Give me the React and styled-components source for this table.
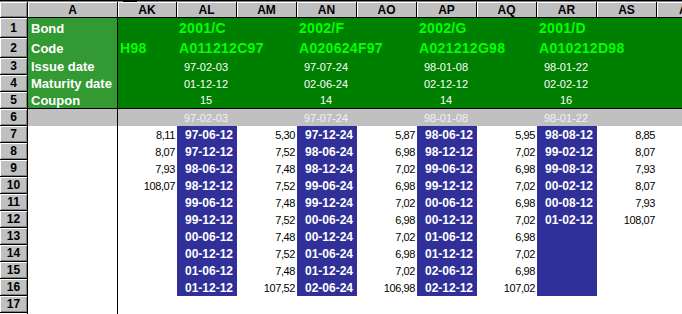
import React from "react";
import styled, { createGlobalStyle, css } from "styled-components";

const GlobalStyle = createGlobalStyle`
  html, body {
    margin: 0;
    padding: 0;
    background: #ffffff;
    overflow: hidden;
  }
`;

const Sheet = styled.div`
  width: 682px;
  height: 314px;
  overflow: hidden;
  font-family: "Liberation Sans", Arial, sans-serif;
  background: #ffffff;
`;

const TopBar = styled.div`
  display: flex;
  height: 2px;
  width: 720px;
  background: #808080;
  border-top: 1px solid #000;
  box-sizing: border-box;
`;

const Notch = styled.div`
  width: 14px;
  height: 2px;
  margin-left: 123px;
  margin-top: -1px;
  background: #000;
`;

const Row = styled.div`
  display: flex;
  width: 720px;
  height: ${(p) => p.$h}px;

  ${(p) =>
    p.$rule &&
    css`
      & > *:not(:first-child) {
        border-bottom: 1px solid #000;
      }
    `}
`;

const Corner = styled.div`
  flex: 0 0 28px;
  box-sizing: border-box;
  background: #c0c0c0;
  border-right: 1px solid #000;
  border-bottom: 1px solid #000;
  box-shadow: inset 1px 1px 0 #fff, inset -1px -1px 0 #808080;
`;

const RowHead = styled(Corner)`
  display: flex;
  align-items: center;
  justify-content: center;
  font-size: 12px;
  font-weight: bold;
  color: #000;
`;

const ColHead = styled.div`
  flex: 0 0 ${(p) => p.$w}px;
  min-width: 0;
  box-sizing: border-box;
  background: #c0c0c0;
  border-right: 1px solid #000;
  border-bottom: 1px solid #000;
  box-shadow: inset 1px 1px 0 #fff;
  display: flex;
  align-items: center;
  justify-content: center;
  font-size: 12px;
  font-weight: bold;
  color: #000;
  white-space: nowrap;
`;

const toneBg = {
  label: "#339933",
  green: "#008000",
  gray: "#c0c0c0",
  blue: "#303098",
  plain: "#ffffff",
};

const LabelCell = styled.div`
  flex: 0 0 90px;
  min-width: 0;
  box-sizing: border-box;
  border-right: 1px solid #000;
  background: ${(p) => toneBg[p.$tone]};
  display: flex;
  align-items: center;
  padding-left: 3px;
  font-size: 13px;
  font-weight: bold;
  color: #fff;
  white-space: nowrap;
`;

const kindFont = {
  code: css`
    font-size: 14px;
    font-weight: bold;
    color: #00ff00;
    letter-spacing: 0.3px;
  `,
  date: css`
    font-size: 11px;
    color: #fff;
  `,
  faint: css`
    font-size: 11px;
    color: #f2f2f2;
  `,
  num: css`
    font-size: 11px;
    color: #000;
    letter-spacing: -0.4px;
  `,
  pay: css`
    font-size: 12px;
    font-weight: bold;
    color: #fff;
  `,
};

const justify = { left: "flex-start", center: "center", right: "flex-end" };

const Cell = styled.div`
  flex: 0 0 ${(p) => p.$w}px;
  min-width: 0;
  box-sizing: border-box;
  background: ${(p) => toneBg[p.$tone]};
  display: flex;
  align-items: center;
  justify-content: ${(p) => justify[p.$align]};
  padding: ${(p) =>
    p.$align === "left" ? "0 0 0 2px" : p.$kind === "pay" ? "0 4px 0 0" : "0 2px 0 0"};
  white-space: nowrap;
  ${(p) => kindFont[p.$kind]}
`;

// text spills over the neighbouring empty cell, as in a spreadsheet
const Spill = styled.span`
  position: relative;
  z-index: 1;
`;

const columns = [
  { id: "AK", w: 59 },
  { id: "AL", w: 60, bond: 0 },
  { id: "AM", w: 60 },
  { id: "AN", w: 60, bond: 1 },
  { id: "AO", w: 60 },
  { id: "AP", w: 60, bond: 2 },
  { id: "AQ", w: 60 },
  { id: "AR", w: 60, bond: 3 },
  { id: "AS", w: 60 },
  { id: "AT", w: 60 },
];

const bonds = [
  { name: "2001/C", code: "A011212C97", issue: "97-02-03", maturity: "01-12-12", coupon: "15" },
  { name: "2002/F", code: "A020624F97", issue: "97-07-24", maturity: "02-06-24", coupon: "14" },
  { name: "2002/G", code: "A021212G98", issue: "98-01-08", maturity: "02-12-12", coupon: "14" },
  { name: "2001/D", code: "A010212D98", issue: "98-01-22", maturity: "02-02-12", coupon: "16" },
];

// rows 7..16, columns AK..AS
const flows = [
  ["8,11", "97-06-12", "5,30", "97-12-24", "5,87", "98-06-12", "5,95", "98-08-12", "8,85"],
  ["8,07", "97-12-12", "7,52", "98-06-24", "6,98", "98-12-12", "7,02", "99-02-12", "8,07"],
  ["7,93", "98-06-12", "7,48", "98-12-24", "7,02", "99-06-12", "6,98", "99-08-12", "7,93"],
  ["108,07", "98-12-12", "7,52", "99-06-24", "6,98", "99-12-12", "7,02", "00-02-12", "8,07"],
  ["", "99-06-12", "7,48", "99-12-24", "7,02", "00-06-12", "6,98", "00-08-12", "7,93"],
  ["", "99-12-12", "7,52", "00-06-24", "6,98", "00-12-12", "7,02", "01-02-12", "108,07"],
  ["", "00-06-12", "7,48", "00-12-24", "7,02", "01-06-12", "6,98", "", ""],
  ["", "00-12-12", "7,52", "01-06-24", "6,98", "01-12-12", "7,02", "", ""],
  ["", "01-06-12", "7,48", "01-12-24", "7,02", "02-06-12", "6,98", "", ""],
  ["", "01-12-12", "107,52", "02-06-24", "106,98", "02-12-12", "107,02", "", ""],
];

const headerRows = [
  { n: 1, h: 20, label: "Bond", field: "name", kind: "code", align: "left" },
  { n: 2, h: 20, label: "Code", field: "code", kind: "code", align: "left" },
  { n: 3, h: 17, label: "Issue date", field: "issue", kind: "date", align: "center" },
  { n: 4, h: 17, label: "Maturity date", field: "maturity", kind: "date", align: "center" },
  { n: 5, h: 17, label: "Coupon", field: "coupon", kind: "date", align: "center", rule: true },
];

const App = () => (
  <Sheet>
    <GlobalStyle />
    <TopBar>
      <Notch />
    </TopBar>

    <Row $h={16}>
      <Corner />
      <ColHead $w={90}>A</ColHead>
      {columns.map((c) => (
        <ColHead key={c.id} $w={c.w}>
          {c.id}
        </ColHead>
      ))}
    </Row>

    {headerRows.map((r) => (
      <Row key={r.n} $h={r.h} $rule={r.rule}>
        <RowHead>{r.n}</RowHead>
        <LabelCell $tone="label">{r.label}</LabelCell>
        {columns.map((c) => {
          let text = c.bond !== undefined ? bonds[c.bond][r.field] : "";
          if (r.n === 2 && c.id === "AK") text = "H98";
          return (
            <Cell key={c.id} $w={c.w} $tone="green" $kind={r.kind} $align={r.align}>
              {text && <Spill>{text}</Spill>}
            </Cell>
          );
        })}
      </Row>
    ))}

    <Row $h={17}>
      <RowHead>6</RowHead>
      <LabelCell $tone="gray" />
      {columns.map((c) => (
        <Cell key={c.id} $w={c.w} $tone="gray" $kind="faint" $align="center">
          {c.bond !== undefined ? bonds[c.bond].issue : ""}
        </Cell>
      ))}
    </Row>

    {flows.map((vals, i) => (
      <Row key={i} $h={17}>
        <RowHead>{i + 7}</RowHead>
        <LabelCell $tone="plain" />
        {columns.map((c, j) => {
          const pay = c.bond !== undefined;
          return (
            <Cell
              key={c.id}
              $w={c.w}
              $tone={pay ? "blue" : "plain"}
              $kind={pay ? "pay" : "num"}
              $align="right"
            >
              {vals[j] || ""}
            </Cell>
          );
        })}
      </Row>
    ))}

    <Row $h={17}>
      <RowHead>17</RowHead>
      <LabelCell $tone="plain" />
    </Row>
    <Row $h={17}>
      <RowHead />
      <LabelCell $tone="plain" />
    </Row>
  </Sheet>
);

export default App;
